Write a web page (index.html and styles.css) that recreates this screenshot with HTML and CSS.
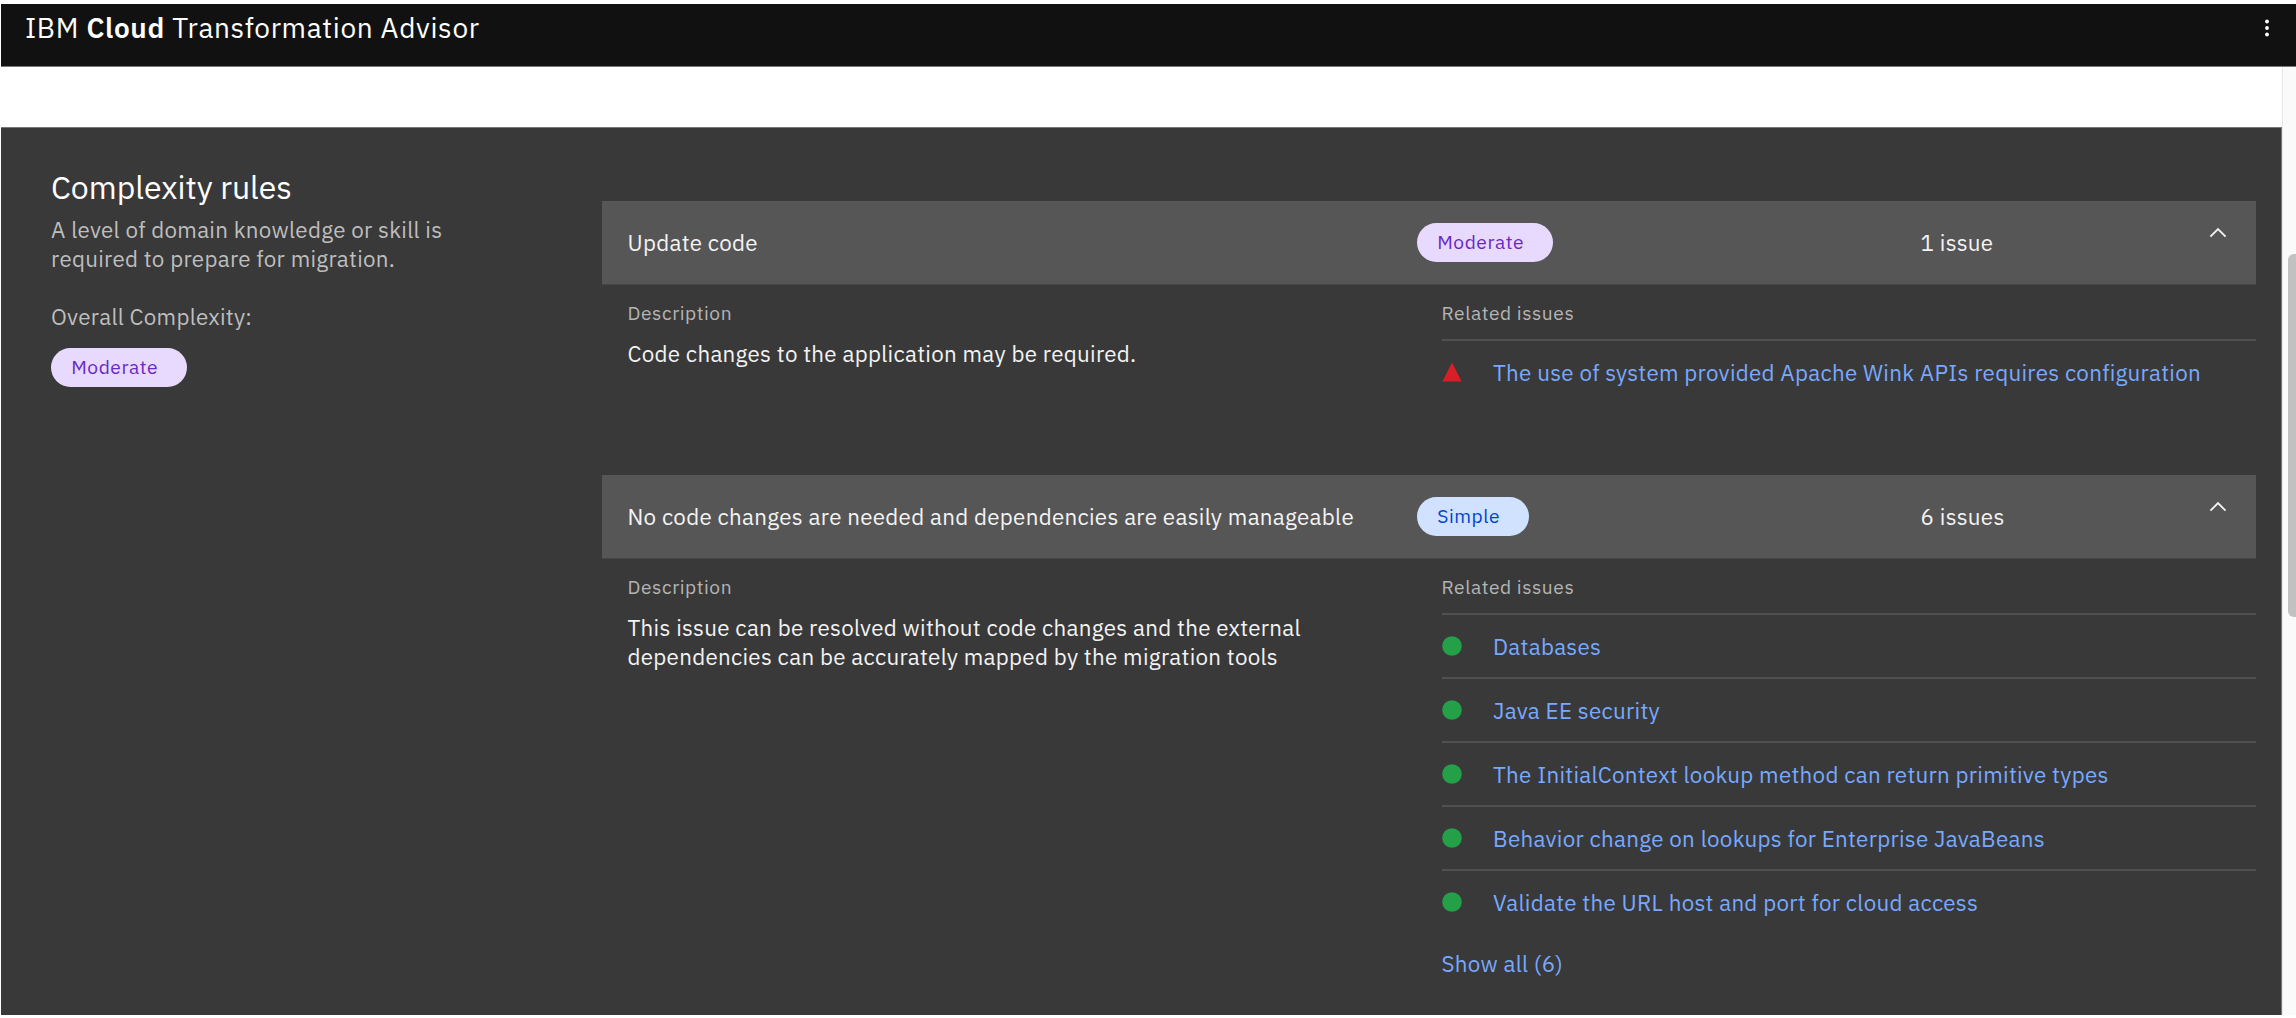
FILE: index.html
```
<!DOCTYPE html>
<html lang="en">
<head>
<meta charset="utf-8">
<title>IBM Cloud Transformation Advisor</title>
<link rel="stylesheet" href="styles.css">
</head>
<body>
<div class="app">
  <header class="topbar">
    <div class="brand">IBM <b>Cloud</b> Transformation Advisor</div>
    <svg class="overflow" width="8" height="20" viewBox="0 0 8 20" fill="#fff"><circle cx="4" cy="3.5" r="1.9"/><circle cx="4" cy="10" r="1.9"/><circle cx="4" cy="16.5" r="1.9"/></svg>
  </header>
  <div class="viewport">
    <main class="page">
      <aside class="summary">
        <h1>Complexity rules</h1>
        <p class="intro">A level of domain knowledge or skill is<br>required to prepare for migration.</p>
        <p class="overall">Overall Complexity:</p>
        <span class="tag moderate">Moderate</span>
      </aside>
      <div class="rules">
        <section class="rule">
          <div class="rule-head">
            <span>Update code</span>
            <span class="tag moderate">Moderate</span>
            <span>1 issue</span>
            <svg class="chevron" width="18" height="12" viewBox="0 0 18 12" fill="none" stroke="#f3f3f3" stroke-width="1.8"><path d="M1.4 9.7L9 2.1l7.6 7.6"/></svg>
          </div>
          <div class="rule-body">
            <div class="description">
              <h2>Description</h2>
              <p>Code changes to the application may be required.</p>
            </div>
            <div class="related">
              <h2>Related issues</h2>
              <ul>
                <li><svg class="severity" width="20" height="20" viewBox="0 0 20 20"><path d="M10 .6l9.6 18.9H.4z" fill="#da1e28"/></svg><a>The use of system provided Apache Wink APIs requires configuration</a></li>
              </ul>
            </div>
          </div>
        </section>
        <section class="rule">
          <div class="rule-head">
            <span>No code changes are needed and dependencies are easily manageable</span>
            <span class="tag simple">Simple</span>
            <span>6 issues</span>
            <svg class="chevron" width="18" height="12" viewBox="0 0 18 12" fill="none" stroke="#f3f3f3" stroke-width="1.8"><path d="M1.4 9.7L9 2.1l7.6 7.6"/></svg>
          </div>
          <div class="rule-body">
            <div class="description">
              <h2>Description</h2>
              <p>This issue can be resolved without code changes and the external<br>dependencies can be accurately mapped by the migration tools</p>
            </div>
            <div class="related">
              <h2>Related issues</h2>
              <ul>
                <li><svg class="severity" width="20" height="20" viewBox="0 0 20 20"><circle cx="10" cy="10" r="9.8" fill="#24a148"/></svg><a>Databases</a></li>
                <li><svg class="severity" width="20" height="20" viewBox="0 0 20 20"><circle cx="10" cy="10" r="9.8" fill="#24a148"/></svg><a>Java EE security</a></li>
                <li><svg class="severity" width="20" height="20" viewBox="0 0 20 20"><circle cx="10" cy="10" r="9.8" fill="#24a148"/></svg><a>The InitialContext lookup method can return primitive types</a></li>
                <li><svg class="severity" width="20" height="20" viewBox="0 0 20 20"><circle cx="10" cy="10" r="9.8" fill="#24a148"/></svg><a>Behavior change on lookups for Enterprise JavaBeans</a></li>
                <li><svg class="severity" width="20" height="20" viewBox="0 0 20 20"><circle cx="10" cy="10" r="9.8" fill="#24a148"/></svg><a>Validate the URL host and port for cloud access</a></li>
              </ul>
              <a class="show-all">Show all (6)</a>
            </div>
          </div>
        </section>
      </div>
    </main>
    <div class="scrollbar"><div class="thumb"></div></div>
  </div>
</div>
</body>
</html>
```
FILE: styles.css
```
* { box-sizing: border-box; margin: 0; padding: 0; }
body {
  background: #fff;
  color: #f3f3f3;
  font: 400 22.4px/29px "IBM Plex Sans", Roboto, "Liberation Sans", sans-serif;
  letter-spacing: .27px;
  overflow: hidden;
}
.app { display: flex; flex-direction: column; height: 1018px; padding: 4px 0 3px 1px; }

.topbar {
  display: flex;
  justify-content: space-between;
  flex: none;
  height: 63px;
  padding: 4px 25px 0 24px;
  background: #111;
  border-bottom: 1px solid #777;
}
.brand { font-size: 28px; line-height: 40px; color: #fff; letter-spacing: .65px; }
.brand b { font-weight: 600; }
.overflow { margin-top: 10px; }

.viewport { display: flex; flex: 1; min-height: 0; }
.page {
  display: flex;
  flex: 1;
  margin-top: 60px;
  padding: 0 25px 0 50px;
  background: #393939;
  border-top: 1px solid #777;
  border-right: 1px solid #777;
}
.scrollbar { width: 14px; padding: 187px 0 0 5px; background: #fafafa; border-left: 1px solid #e8e8e8; }
.scrollbar .thumb { height: 363px; background: #c1c1c1; border-radius: 6px 0 0 6px; }

.summary { width: 550.5px; padding-top: 39px; color: #bebebe; }
h1 { font-size: 32px; line-height: 40px; font-weight: 400; color: #fff; letter-spacing: 0; }
.intro { margin-top: 8px; }
.overall { margin-top: 29px; }
.summary .tag { margin-top: 17px; margin-left: -.5px; }

.tag {
  display: block;
  justify-self: start;
  height: 39px;
  padding-left: 20.7px;
  border-radius: 20px;
  font-size: 19.2px;
  line-height: 38px;
  letter-spacing: .56px;
}
.moderate { width: 136.5px; background: #e8daff; color: #6929c4; }
.simple { width: 112px; background: #d0e2ff; color: #0043ce; }

.rules { flex: 1; padding-top: 73px; }
.rule { height: 274px; }
.rule-head {
  display: grid;
  grid-template-columns: 789px 504px 1fr auto;
  align-items: center;
  height: 84px;
  padding: 0 29.5px 0 26px;
  background: #565656;
  border-bottom: 1px solid #464646;
}
.chevron { align-self: start; margin-top: 26px; }
.rule-body { display: flex; padding: 15px 0 0 26px; }
.description { width: 814px; }
h2 { font-size: 19.2px; line-height: 26px; font-weight: 400; color: #b4b4b4; letter-spacing: .56px; }
.description p { margin-top: 13px; }
.related { flex: 1; }
ul { list-style: none; margin-top: 13px; }
li { display: flex; align-items: center; gap: 31.5px; height: 64px; border-top: 2px solid #505050; }
a { color: #78a9ff; }
.show-all { display: block; margin-top: 16px; }
```
